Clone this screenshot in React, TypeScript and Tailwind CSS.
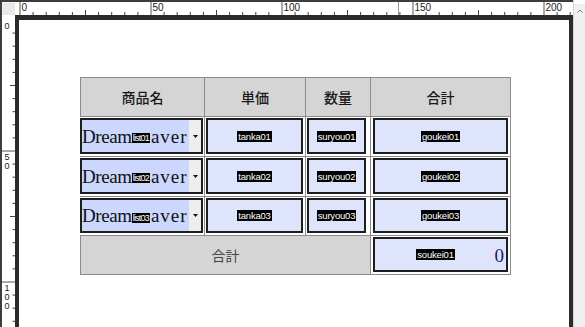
import React from "react";

const Label = ({ t, cls = "" }: { t: string; cls?: string }) => (
  <span
    className={
      "bg-black text-white text-[9.5px] leading-[11px] px-[1px] tracking-[-0.2px] font-['Liberation_Sans',sans-serif] whitespace-nowrap " +
      cls
    }
  >
    {t}
  </span>
);

function TopRuler() {
  const items: React.ReactNode[] = [];
  for (let k = 0; k < 43; k++) {
    const x = 5 + 13.1 * k;
    if (x > 556) break;
    if (k % 10 === 0) {
      items.push(<line key={"l" + k} x1={x} y1={0} x2={x} y2={13} stroke="#555" strokeWidth={1} />);
      items.push(
        <text key={"t" + k} x={x + 1.5} y={9} fontSize={10} fontFamily="Liberation Sans, sans-serif" fill="#1a1a1a">
          {k * 5}
        </text>
      );
    } else if (k % 5 === 0) {
      items.push(<line key={"l" + k} x1={x} y1={8} x2={x} y2={13} stroke="#444" strokeWidth={1} />);
    } else {
      items.push(<line key={"l" + k} x1={x} y1={10} x2={x} y2={13} stroke="#444" strokeWidth={1} />);
    }
  }
  return (
    <svg width={558} height={13} className="block bg-white">
      <line x1={383.5} y1={0} x2={383.5} y2={13} stroke="#999" strokeWidth={1} />
      {items}
    </svg>
  );
}

function LeftRuler() {
  const items: React.ReactNode[] = [];
  for (let k = 0; k < 25; k++) {
    const y = 5 + 13.1 * k;
    if (y > 312) break;
    if (k % 10 === 0) {
      if (k > 0)
        items.push(<line key={"l" + k} x1={0} y1={y} x2={13} y2={y} stroke="#555" strokeWidth={1} />);
      const digits = String(k * 5).split("");
      digits.forEach((d, i) =>
        items.push(
          <text
            key={"t" + k + "_" + i}
            x={5}
            y={y + 9}
            dy={i * 9}
            fontSize={9}
            textAnchor="middle"
            fontFamily="Liberation Sans, sans-serif"
            fill="#1a1a1a"
          >
            {d}
          </text>
        )
      );
    } else if (k % 5 === 0) {
      items.push(<line key={"l" + k} x1={8} y1={y} x2={13} y2={y} stroke="#444" strokeWidth={1} />);
    } else {
      items.push(<line key={"l" + k} x1={10.5} y1={y} x2={13} y2={y} stroke="#444" strokeWidth={1} />);
    }
  }
  return (
    <svg width={13} height={312} className="block bg-white">
      {items}
    </svg>
  );
}

const Box = ({ children, cls = "" }: { children: React.ReactNode; cls?: string }) => (
  <div className={"h-full border-2 border-[#1e1e1e] bg-[#dfe4fd] flex items-center justify-center " + cls}>
    {children}
  </div>
);

function SelectCell({ n }: { n: string }) {
  return (
    <div className="bg-white pt-[1px] pb-[2px] pr-[1px] -ml-px">
      <div className="h-full border-2 border-[#1e1e1e] flex">
        <div className="flex-1 bg-[#cbd7fc] flex items-center overflow-hidden font-['Liberation_Serif',serif] text-[19px] text-[#111] leading-none">
          <span className="tracking-[-0.4px]">Dream</span>
          <span className="bg-black text-white text-[9px] leading-[10px] tracking-[-0.8px] px-[1px] font-['Liberation_Sans',sans-serif] translate-y-[2px]">
            list{n}
          </span>
          <span className="tracking-[1px] ml-px">aver</span>
        </div>
        <div className="w-[12px] bg-[#eeeeee] flex items-center justify-center">
          <svg width="5" height="3" viewBox="0 0 5 3">
            <path d="M0 0 H5 L2.5 3 Z" fill="#111" />
          </svg>
        </div>
      </div>
    </div>
  );
}

const Cell = ({ children, cls = "" }: { children: React.ReactNode; cls?: string }) => (
  <div className={"bg-white pt-[1px] pb-[2px] " + cls}>{children}</div>
);

export default function App() {
  const rows = ["01", "02", "03"];
  const hdr =
    "bg-[#d5d5d5] flex items-center justify-center text-[14px] font-medium text-[#1a1a1a] font-['Noto_Sans_CJK_JP',sans-serif]";
  return (
    <div className="w-[585px] h-[327px] flex overflow-hidden bg-white">
      <div className="w-[573px] flex flex-col border-l-2 border-t-2 border-[#3d3d3d]">
        <div className="h-[13px] flex">
          <div className="w-[13px] bg-[#e8e8e8] border-l border-t border-[#f4f4f4]" />
          <TopRuler />
        </div>
        <div className="flex-1 flex">
          <div className="w-[13px]">
            <LeftRuler />
          </div>
          <div className="flex-1 border-t-[5px] border-l-4 border-r-4 border-[#2b2b2b] bg-white pl-[61px] pt-[57px]">
            <div className="w-[431px] grid grid-cols-[123px_100px_64px_139px] grid-rows-[38px_39px_39px_38px_38px] gap-px p-px bg-[#8c8c8c]">
              <div className={hdr}>商品名</div>
              <div className={hdr}>単価</div>
              <div className={hdr}>数量</div>
              <div className={hdr}>合計</div>
              {rows.map((n) => (
                <React.Fragment key={n}>
                  <SelectCell n={n} />
                  <Cell cls="pl-[1px] pr-[2px]">
                    <Box>
                      <Label t={"tanka" + n} />
                    </Box>
                  </Cell>
                  <Cell cls="pl-[1px] pr-[4px]">
                    <Box>
                      <Label t={"suryou" + n} />
                    </Box>
                  </Cell>
                  <Cell cls="pl-[2px] pr-[2px]">
                    <Box>
                      <Label t={"goukei" + n} />
                    </Box>
                  </Cell>
                </React.Fragment>
              ))}
              <div className="col-span-3 bg-[#d5d5d5] flex items-center justify-center text-[14px] text-[#444] font-['Noto_Sans_CJK_JP',sans-serif]">
                合計
              </div>
              <Cell cls="pl-[2px] pr-[2px]">
                <Box cls="relative">
                  <Label t="soukei01" cls="mr-[10px]" />
                  <span className="absolute right-[2px] top-1/2 -translate-y-1/2 font-['Liberation_Serif',serif] text-[19px] leading-none text-[#1a1f5c]">
                    0
                  </span>
                </Box>
              </Cell>
            </div>
          </div>
        </div>
      </div>
      <div className="w-[12px] bg-[#f0f0f0] border-l border-[#d4d4d4] flex flex-col">
        <div className="h-[4px] bg-white" />
        <div className="h-[14px] flex items-center justify-center">
          <svg width="6" height="4" viewBox="0 0 6 4">
            <path d="M0.5 3.5 L3 1 L5.5 3.5" stroke="#7a7a7a" fill="none" strokeWidth="1" />
          </svg>
        </div>
      </div>
    </div>
  );
}
